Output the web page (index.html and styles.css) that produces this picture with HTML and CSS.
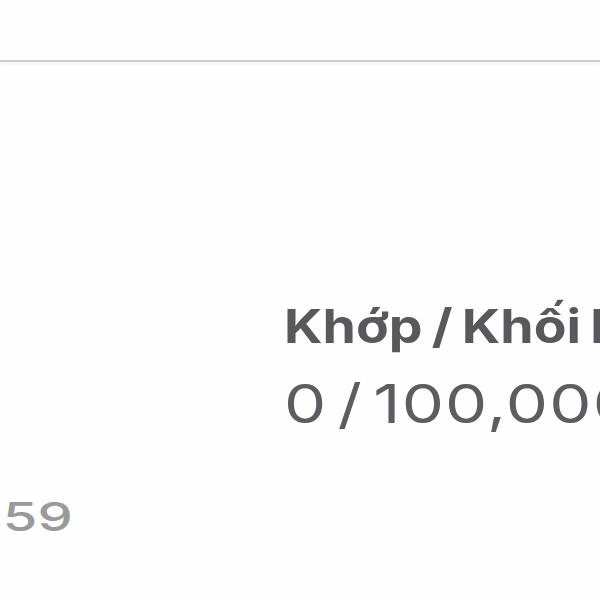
FILE: index.html
```html
<!DOCTYPE html><html>
<head><title>Lệnh</title>
	<meta charset="utf-8">
	<link rel="stylesheet" href="styles.css">
</head><body>
<div class="topbar"></div>

<div class="detail">
	<div class="row">
		<div class="cell"></div>
		<div class="cell">
			<div class="label">Khớp / Khối lượng</div>
			<div class="value">0 / 100,000</div>
		</div>
	</div>
	<div class="row second">
		<div class="cell left">
			<div class="sub">1,359</div>
		</div>
		<div class="cell"></div>
	</div>
</div>
</body></html>
```

FILE: styles.css
```css
html{font-family: Inter, "Noto Sans", sans-serif;}
html,body{margin:0;padding:0;background:#fefefe;}
body{width:600px;height:600px;overflow:hidden;}

.topbar{height:60px;border-bottom:2px solid #cbcbcd;box-shadow:0 3px 3px rgba(0,0,0,0.03);}

.detail{padding-top:236px;}
.row{display:grid;grid-template-columns:284px 1fr;}
.cell{white-space:nowrap;min-width:0;}

/* the source shot is stretched sideways, so the text is too */
.label{font-size:47px;line-height:56px;font-weight:700;color:#58585d;transform:scaleX(1.14);transform-origin:left center;word-spacing:-3px;}
.value{margin-top:18px;font-size:54px;line-height:64px;font-weight:400;color:#5c5c61;transform:scaleX(1.24);transform-origin:left center;letter-spacing:1px;word-spacing:-8px;}

.second{margin-top:57px;}
.left{display:flex;justify-content:flex-end;width:73px;}
.sub{font-size:40px;line-height:48px;font-weight:500;color:#9a9a9c;transform:scaleX(1.4);transform-origin:right center;}
```
